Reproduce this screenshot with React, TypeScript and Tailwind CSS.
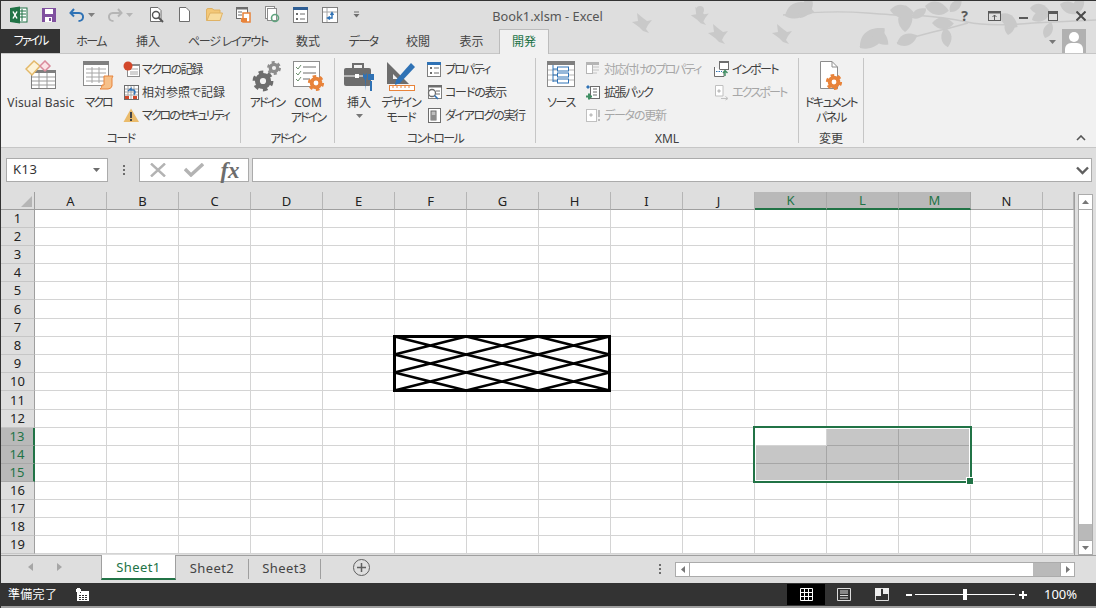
import type { ReactNode } from "react";

const GREEN = "#217346";
const ORANGE = "#e8833a";
const BLUE = "#2f72b5";
const COLUMNS = ["A", "B", "C", "D", "E", "F", "G", "H", "I", "J", "K", "L", "M", "N", ""];
const ROWS = Array.from({ length: 19 }, (_, i) => i + 1);

function Gear({ cx, cy, r, color }: { cx: number; cy: number; r: number; color: string }) {
  const outer = r * 0.95;
  const circ = 2 * Math.PI * outer;
  return (
    <g fill="none" stroke={color}>
      <circle cx={cx} cy={cy} r={r * 0.62} strokeWidth={r * 0.55} />
      <circle cx={cx} cy={cy} r={outer} strokeWidth={r * 0.42} strokeDasharray={`${circ / 12} ${circ / 12}`} />
    </g>
  );
}

function Icon({ w, h, children, box }: { w: number; h: number; children: ReactNode; box?: string }) {
  return (
    <svg width={w} height={h} viewBox={box ?? `0 0 ${w} ${h}`} className="shrink-0">
      {children}
    </svg>
  );
}

function VisualBasicIcon() {
  return (
    <Icon w={32} h={30}>
      <rect x="6.5" y="10.5" width="24" height="18" fill="#fff" stroke="#7f7f7f" />
      <rect x="6" y="10" width="25" height="3" fill="#7f7f7f" />
      {[17, 21, 25].map((y) => (
        <line key={y} x1="7" x2="30" y1={y} y2={y} stroke="#9a9a9a" />
      ))}
      {[14, 22].map((x) => (
        <line key={x} x1={x} x2={x} y1="13" y2="28" stroke="#9a9a9a" />
      ))}
      <path d="M1 9 L9 1 L15 6 L7 15 Z" fill="#fdf3d8" stroke="#e3b868" strokeWidth="1.5" />
      <path d="M15 6 L20 1 L25 6 L20 11 Z" fill="#fbe3e6" stroke="#d98a9b" strokeWidth="1.5" />
    </Icon>
  );
}

function MacroIcon() {
  return (
    <Icon w={32} h={30}>
      <rect x="1.5" y="1.5" width="25" height="24" fill="#fff" stroke="#8c8c8c" />
      <rect x="1" y="1" width="26" height="4" fill="#7f7f7f" />
      {[9, 13, 17, 21].map((y) => (
        <line key={y} x1="4" x2="24" y1={y} y2={y} stroke="#a6a6a6" />
      ))}
      <line x1="10" x2="10" y1="7" y2="23" stroke="#a6a6a6" />
      <line x1="17" x2="17" y1="7" y2="23" stroke="#a6a6a6" />
      <path d="M22 16 H31 L30 18 V26 Q29 29 26 29 H18 Q20 28 20 25 H22 Z" fill="#f6c089" stroke={ORANGE} />
    </Icon>
  );
}

function RecordIcon() {
  return (
    <Icon w={17} h={17}>
      <rect x="4.5" y="3.5" width="12" height="12" fill="#fff" stroke="#8c8c8c" />
      <rect x="4" y="3" width="13" height="2" fill="#8c8c8c" />
      {[8, 11, 13].map((y) => (
        <line key={y} x1="7" x2="15" y1={y} y2={y} stroke="#a6a6a6" />
      ))}
      <circle cx="5" cy="5" r="4.5" fill="#d2472a" />
    </Icon>
  );
}

function RelativeIcon() {
  return (
    <Icon w={17} h={17}>
      <rect x="1.5" y="1.5" width="14" height="14" fill="#fff" stroke="#6d6d6d" />
      {[5, 8, 11].map((n) => (
        <g key={n} stroke="#a6a6a6">
          <line x1="2" x2="15" y1={n} y2={n} />
          <line x1={n} x2={n} y1="2" y2="15" />
        </g>
      ))}
      <rect x="2" y="12" width="4" height="3" fill="#d2472a" />
      <rect x="10" y="12" width="4" height="3" fill="#d2472a" />
      <path d="M5 7 L8 4.5 V6 H11 Q13 8 11 10.5" fill="none" stroke={BLUE} strokeWidth="1.5" />
    </Icon>
  );
}

function WarningIcon() {
  return (
    <Icon w={17} h={17}>
      <path d="M8 1.5 L16 15 H0.5 Z" fill="#eabb6b" />
      <rect x="7" y="5" width="2" height="6" fill="#444" />
      <rect x="7" y="12" width="2" height="2" fill="#444" />
    </Icon>
  );
}

function AddinIcon() {
  return (
    <Icon w={32} h={32}>
      <Gear cx={23} cy={8} r={6} color="#8c8c8c" />
      <Gear cx={12} cy={21} r={9} color="#6d6d6d" />
    </Icon>
  );
}

function ComAddinIcon() {
  return (
    <Icon w={34} h={32}>
      <rect x="2.5" y="1.5" width="26" height="25" fill="#fff" stroke="#8c8c8c" />
      <path d="M5 7 L7 9 L10 5 M5 13 L7 15 L10 11 M5 19 L7 21 L10 17" fill="none" stroke="#6d8f6d" />
      <path d="M12 7 H25 M12 13 H25 M12 19 H19" stroke="#6d6d6d" />
      <Gear cx={25} cy={23} r={7} color={ORANGE} />
    </Icon>
  );
}

function ToolboxIcon() {
  return (
    <Icon w={32} h={32}>
      <path d="M10 8 V4 H20 V8" fill="none" stroke="#6d6d6d" strokeWidth="2" />
      <rect x="1" y="8" width="27" height="18" rx="2" fill="#6d6d6d" />
      <line x1="1" x2="24" y1="16" y2="16" stroke="#fff" />
      <rect x="12" y="14" width="4" height="4" fill="#fff" />
      <path d="M22 31 V20 L20 17 V13 L22 15 L24 13 V17 L23 20" fill={BLUE} />
      <path d="M27 31 V21 H29 V31 Z M25 14 H31 V20 H25 Z" fill={BLUE} />
    </Icon>
  );
}

function DesignIcon() {
  return (
    <Icon w={32} h={32}>
      <path d="M2 2 L2 24 L24 24 Z M8 14 L8 19 L13 19 Z" fill="#6d6d6d" fillRule="evenodd" />
      <path d="M11 20 L10 25 L15 23 L30 7 L26 3 Z" fill={BLUE} />
      <rect x="4.5" y="25.5" width="25" height="5" fill="#fff" stroke={ORANGE} />
      <path d="M8 26 V28 M12 26 V28 M16 26 V28 M20 26 V28 M24 26 V28" stroke={ORANGE} />
    </Icon>
  );
}

function PropertyIcon() {
  return (
    <Icon w={17} h={17}>
      <rect x="1.5" y="1.5" width="13" height="14" fill="#fff" stroke="#7f7f7f" />
      <rect x="1" y="1" width="14" height="3" fill={BLUE} />
      <rect x="4" y="6" width="2" height="2" fill="#6d6d6d" />
      <rect x="4" y="11" width="2" height="2" fill="#6d6d6d" />
      <path d="M8 7 H13 M8 12 H13" stroke="#6d6d6d" />
    </Icon>
  );
}

function CodeIcon() {
  return (
    <Icon w={17} h={17}>
      <rect x="2.5" y="1.5" width="13" height="13" fill="#fff" stroke="#7f7f7f" />
      <rect x="2" y="1" width="14" height="2.5" fill="#6d6d6d" />
      <path d="M10 7 H14 M10 10 H14" stroke="#6d6d6d" />
      <circle cx="6" cy="9" r="3.5" fill="#fff" stroke="#6d6d6d" strokeWidth="1.3" />
      <line x1="8.5" y1="11.5" x2="12" y2="15" stroke={BLUE} strokeWidth="1.6" />
    </Icon>
  );
}

function DialogIcon() {
  return (
    <Icon w={17} h={17}>
      <rect x="2.5" y="1.5" width="12" height="14" fill="#fff" stroke="#6d6d6d" />
      <rect x="5" y="4" width="5" height="9" fill="#bfbfbf" stroke="#6d6d6d" />
      <rect x="5" y="8" width="5" height="5" fill="#8c8c8c" />
    </Icon>
  );
}

function SourceIcon() {
  return (
    <Icon w={30} h={30}>
      <rect x="1.5" y="1.5" width="27" height="25" fill="#fff" stroke="#8c8c8c" />
      <rect x="1" y="1" width="28" height="4" fill="#7f7f7f" />
      {[10, 15, 20].map((y) => (
        <line key={y} x1="2" x2="28" y1={y} y2={y} stroke="#b5b5b5" />
      ))}
      <path d="M7 5 V22 M7 9 H11 M7 15 H11 M7 21 H11" stroke={BLUE} fill="none" />
      <rect x="11.5" y="7" width="11" height="4" fill="#fff" stroke={BLUE} />
      <rect x="11.5" y="13" width="11" height="4" fill="#fff" stroke={BLUE} />
      <rect x="11.5" y="19" width="11" height="4" fill="#fff" stroke={BLUE} />
    </Icon>
  );
}

function MapPropsIcon() {
  return (
    <Icon w={17} h={17}>
      <rect x="1.5" y="1.5" width="6" height="11" fill="#fff" stroke="#b5b5b5" />
      <rect x="1" y="1" width="13" height="3" fill="#b5b5b5" />
      <path d="M8 6 H14 M8 9 H14 M8 12 H12" stroke="#c4c4c4" />
    </Icon>
  );
}

function PackIcon() {
  return (
    <Icon w={17} h={17}>
      <rect x="5.5" y="2.5" width="9" height="12" fill="#fff" stroke="#6d6d6d" />
      <path d="M8 5 H12 M8 8 H12 M8 11 H12" stroke="#6d6d6d" />
      <path d="M1 3 L3 1 L5 3 L3 5 Z" fill={BLUE} />
      <path d="M1 12.5 H7 M4 9.5 V15.5" stroke="#3f8f63" strokeWidth="2" />
    </Icon>
  );
}

function RefreshIcon() {
  return (
    <Icon w={17} h={17}>
      <rect x="1.5" y="2.5" width="10" height="12" fill="#fff" stroke="#c0c0c0" />
      <path d="M4 8 L6 6 L8 8 L6 10 Z" fill="#c0c0c0" />
      <rect x="13" y="3" width="2" height="7" fill="#bdbdbd" />
      <rect x="13" y="12" width="2" height="2" fill="#bdbdbd" />
    </Icon>
  );
}

function ImportIcon() {
  return (
    <Icon w={17} h={17}>
      <rect x="6.5" y="0.5" width="9" height="8" fill="#fff" stroke="#6d6d6d" />
      <rect x="6" y="0" width="10" height="2" fill="#6d6d6d" />
      <path d="M1.5 6 V15.5 H11 V11" fill="#fff" stroke="#6d6d6d" />
      <path d="M3 10.5 H9" stroke={BLUE} strokeDasharray="1.5 1" />
      <path d="M12 15 V10 M10 12 L12 9.5 L14.5 12" fill="none" stroke="#3f8f63" strokeWidth="1.4" />
    </Icon>
  );
}

function ExportIcon() {
  return (
    <Icon w={17} h={17}>
      <path d="M2.5 1.5 H10 V12 H2.5 Z" fill="#fff" stroke="#c0c0c0" />
      <path d="M4 7 L6 5 L8 7 L6 9 Z" fill="#c0c0c0" />
      <path d="M8 14.5 H14 M12.5 12.5 L15 14.5 L12.5 16" fill="none" stroke="#c0c0c0" />
    </Icon>
  );
}

function DocPanelIcon() {
  return (
    <Icon w={30} h={32}>
      <path d="M4.5 1.5 H16 L21.5 7 V28.5 H4.5 Z" fill="#fff" stroke="#8c8c8c" />
      <path d="M16 1.5 V7 H21.5" fill="none" stroke="#8c8c8c" />
      <Gear cx={18} cy={22} r={7} color={ORANGE} />
    </Icon>
  );
}

function Caret({ color = "#6d6d6d" }: { color?: string }) {
  return (
    <svg width="7" height="4" viewBox="0 0 7 4" className="shrink-0">
      <path d="M0 0 H7 L3.5 4 Z" fill={color} />
    </svg>
  );
}

function QuickAccess() {
  return (
    <div className="relative flex h-full items-center pb-[1px] pl-[9px]">
      <svg width="18" height="18" viewBox="0 0 18 18" className="mr-[13px]">
        <rect x="6" y="2" width="11" height="14" fill="#fff" stroke={GREEN} />
        <path d="M10 5 H16 M10 8 H16 M10 11 H16 M12 3 V15" stroke={GREEN} />
        <path d="M0 2 L10 0.5 V17.5 L0 16 Z" fill={GREEN} />
        <path d="M3 5.5 L7 12.5 M7 5.5 L3 12.5" stroke="#fff" strokeWidth="1.5" />
      </svg>
      <svg width="16" height="16" viewBox="0 0 16 16" className="mr-[12px]">
        <rect x="1" y="1" width="14" height="14" fill="#80509f" />
        <rect x="4" y="2" width="8" height="5" fill="#fff" />
        <rect x="4" y="10" width="7" height="5" fill="#fff" />
        <rect x="8" y="11" width="2" height="3" fill="#80509f" />
      </svg>
      <svg width="16" height="14" viewBox="0 0 16 14" className="mr-[3px]">
        <path d="M5 1 L1.5 5 L5 8.5 M2 5 H10 Q14.5 5.5 14 9.5 Q13.5 13 9.5 13" fill="none" stroke={BLUE} strokeWidth="2" />
      </svg>
      <span className="mr-[12px]"><Caret color="#7f7f7f" /></span>
      <svg width="16" height="14" viewBox="0 0 16 14" className="mr-[3px]">
        <path d="M11 1 L14.5 5 L11 8.5 M14 5 H6 Q1.5 5.5 2 9.5 Q2.5 13 6.5 13" fill="none" stroke="#b5b5b5" strokeWidth="2" />
      </svg>
      <span className="mr-[16px]"><Caret color="#b5b5b5" /></span>
      <svg width="16" height="17" viewBox="0 0 16 17" className="mr-[13px]">
        <path d="M1.5 1.5 H9 L12 4.5 V15.5 H1.5 Z" fill="#fff" stroke="#6d6d6d" />
        <circle cx="7" cy="9" r="3.5" fill="#fff" stroke="#555" strokeWidth="1.4" />
        <line x1="9.5" y1="11.5" x2="14" y2="16" stroke="#555" strokeWidth="2" />
      </svg>
      <svg width="13" height="15" viewBox="0 0 13 15" className="mr-[15px]">
        <path d="M1.5 0.5 H8 L11.5 4 V14.5 H1.5 Z" fill="#fff" stroke="#6d6d6d" />
      </svg>
      <svg width="17" height="13" viewBox="0 0 17 13" className="mr-[12px]">
        <path d="M0.5 2 Q0.5 0.5 2 0.5 H6 L8 2 H14 V12.5 H0.5 Z" fill="#f3c777" stroke="#dfb265" />
        <path d="M1 12.5 L4 5 H16.5 L14 12.5 Z" fill="#f8dc9e" stroke="#dfb265" />
      </svg>
      <svg width="17" height="17" viewBox="0 0 17 17" className="mr-[12px]">
        <rect x="1.5" y="1.5" width="11" height="11" fill="#fff" stroke="#6d6d6d" />
        <rect x="1" y="1" width="12" height="2.5" fill="#6d6d6d" />
        <path d="M3 6 H7 M3 9 H7" stroke="#6d6d6d" />
        <rect x="8" y="7" width="7" height="9" fill="#fff" stroke={ORANGE} strokeWidth="1.5" />
        <rect x="6" y="12" width="6" height="4" fill={ORANGE} />
      </svg>
      <svg width="16" height="17" viewBox="0 0 16 17" className="mr-[13px]">
        <rect x="1.5" y="0.5" width="9" height="12" fill="#fff" stroke="#8c8c8c" />
        <rect x="3.5" y="2.5" width="9" height="12" fill="#fff" stroke="#8c8c8c" />
        <circle cx="11" cy="12" r="3.5" fill="none" stroke="#5fa37e" strokeWidth="1.6" />
      </svg>
      <svg width="15" height="16" viewBox="0 0 15 16" className="mr-[14px]">
        <rect x="0.5" y="0.5" width="14" height="15" fill="#fff" stroke="#7f7f7f" />
        <rect x="0" y="0" width="15" height="3" fill="#2f5f95" />
        <rect x="3" y="6" width="2" height="2" fill="#6d6d6d" />
        <rect x="3" y="11" width="2" height="2" fill="#6d6d6d" />
        <path d="M7 7 H12 M7 12 H12" stroke="#6d6d6d" />
      </svg>
      <svg width="16" height="16" viewBox="0 0 16 16" className="mr-[15px]">
        <rect x="0.5" y="0.5" width="15" height="15" fill="#fff" stroke="#7f7f7f" />
        <path d="M5 1 V15 M1 5 H15" stroke="#a6a6a6" />
        <path d="M6 11 H10 V6 M8.5 8 L10 5.5 L11.5 8 M8 9.5 L5.5 11 L8 12.5" fill="none" stroke={BLUE} strokeWidth="1.4" />
      </svg>
      <svg width="7" height="7" viewBox="0 0 7 7">
        <path d="M1 1 H6" stroke="#6d6d6d" />
        <path d="M0.5 3 H6.5 L3.5 6.5 Z" fill="#6d6d6d" />
      </svg>
    </div>
  );
}

function Leaf({ x, y, a, s = 1 }: { x: number; y: number; a: number; s?: number }) {
  return (
    <path
      d="M0 0 C4 -8 12 -9 20 -3 C16 5 6 6 0 0 Z"
      transform={`translate(${x} ${y}) rotate(${a}) scale(${s * 1.2})`}
    />
  );
}

function Bird({ x, y, s = 1 }: { x: number; y: number; s?: number }) {
  return (
    <path
      d="M-8 -2 L-2 -3 L-3 -11 L3 -6 L7 -3 L12 -4 L8 1 L6 5 L9 9 L3 7 L-1 3 Z"
      transform={`translate(${x} ${y}) scale(${s})`}
    />
  );
}

// decoration behind the title bar
function TitleArt() {
  return (
    <svg width="476" height="53" viewBox="620 0 476 53" className="pointer-events-none absolute right-0 top-0">
      <g fill="#c9c9c9">
        <Bird x={640} y={24} />
        <Bird x={698} y={17} s={0.9} />
        <Bird x={716} y={35} />
        <Bird x={780} y={35} />
        <circle cx="700" cy="10" r="4" />
        <g fill="none" stroke="#c9c9c9" strokeWidth="1.5">
          <path d="M783 15 Q830 10 867 13 T913 15 Q945 17 967 22 T1033 23 L1096 20" />
          <path d="M897 43 Q915 36 933 32 T968 23" />
          <path d="M860 47 Q870 38 880 34" />
        </g>
        <Leaf x={785} y={16} a={-15} s={1.2} />
        <Leaf x={800} y={18} a={-50} s={0.9} />
        <Leaf x={808} y={12} a={-80} s={0.7} />
        <Leaf x={795} y={8} a={20} s={0.8} />
        <Leaf x={860} y={48} a={-30} s={1.3} />
        <Leaf x={872} y={30} a={50} s={0.9} />
        <Leaf x={905} y={32} a={-80} s={1.1} />
        <Leaf x={890} y={10} a={15} s={1} />
        <Leaf x={897} y={44} a={-15} s={0.9} />
        <Leaf x={925} y={6} a={20} s={1} />
        <Leaf x={932} y={23} a={10} s={0.9} />
        <Leaf x={945} y={28} a={90} s={0.8} />
        <Leaf x={912} y={18} a={-25} s={0.7} />
        <Leaf x={950} y={12} a={-40} s={0.7} />
        <Leaf x={1008} y={35} a={-70} s={0.8} />
        <Leaf x={1000} y={14} a={45} s={0.9} />
        <Leaf x={1032} y={20} a={-15} s={0.8} />
        <Leaf x={1045} y={38} a={-60} s={0.7} />
        <Leaf x={1075} y={14} a={-60} s={0.8} />
        <Leaf x={1030} y={8} a={15} s={0.8} />
        <Leaf x={1060} y={4} a={30} s={0.9} />
      </g>
    </svg>
  );
}

function WindowControls() {
  return (
    <div className="absolute right-0 top-0 flex h-[29px] items-center text-[#5a5a5a]">
      <span className="w-[29px] pr-[2px] text-center text-[14px] font-bold leading-none">?</span>
      <div className="flex w-[29px] justify-center">
        <svg width="13" height="10" viewBox="0 0 13 10">
          <rect x="0.5" y="0.5" width="12" height="9" fill="none" stroke="#5a5a5a" />
          <rect x="0.5" y="0.5" width="12" height="2" fill="#5a5a5a" />
          <path d="M6.5 9 V4 M4.5 6 L6.5 4 L8.5 6" fill="none" stroke="#5a5a5a" />
        </svg>
      </div>
      <div className="flex w-[29px] justify-center">
        <div className="h-[2px] w-[9px] translate-y-[2px] bg-[#5a5a5a]" />
      </div>
      <div className="flex w-[29px] justify-center">
        <div className="h-[10px] w-[10px] border border-t-[3px] border-[#5a5a5a]" />
      </div>
      <div className="flex w-[29px] justify-center pr-[1px]">
        <svg width="10" height="10" viewBox="0 0 10 10">
          <path d="M0.5 0.5 L9.5 9.5 M9.5 0.5 L0.5 9.5" stroke="#4a4a4a" strokeWidth="2" />
        </svg>
      </div>
    </div>
  );
}

const TABS = [
  { label: "ホーム", cls: "w-[62px] tracking-[-1.6px]" },
  { label: "挿入", cls: "w-[52px]" },
  { label: "ページ レイアウト", cls: "w-[108px] tracking-[-1.2px]" },
  { label: "数式", cls: "w-[52px]" },
  { label: "データ", cls: "w-[58px] tracking-[-1.6px]" },
  { label: "校閲", cls: "w-[52px]" },
  { label: "表示", cls: "w-[55px]" },
];

function TabRow() {
  return (
    <div className="relative z-10 flex h-[24px] items-stretch text-[12px] text-[#444]">
      <div className="flex w-[59px] items-center justify-center bg-[#333] tracking-[-2px] text-white">ファイル</div>
      {TABS.map((t) => (
        <div key={t.label} className={`flex items-center justify-center pt-[1px] ${t.cls}`}>{t.label}</div>
      ))}
      <div className="flex h-[25px] w-[50px] items-center justify-center border-x border-t border-[#bcbcbc] bg-[#f1f1f1] text-[#217346]">
        開発
      </div>
      <div className="ml-auto mr-[10px] flex items-stretch">
        <div className="mr-[6px] flex items-center pt-[1px]"><Caret color="#777" /></div>
        <div className="relative h-[24px] w-[24px] overflow-hidden bg-[#b1b1b1]">
          <div className="absolute left-[7px] top-[3px] h-[10px] w-[10px] rounded-full bg-white" />
          <div className="absolute left-[3px] top-[14px] h-[12px] w-[18px] rounded-t-[6px] bg-white" />
        </div>
      </div>
    </div>
  );
}

function BigButton({ icon, label, cls, caret }: { icon: ReactNode; label: ReactNode; cls: string; caret?: boolean }) {
  return (
    <div className={`flex shrink-0 flex-col items-center ${cls}`}>
      <div className="flex h-[37px] w-full items-start justify-center pt-[2px]">{icon}</div>
      <div className="whitespace-nowrap text-center leading-[15px]">{label}</div>
      {caret && <div className="mt-[4px]"><Caret color="#777" /></div>}
    </div>
  );
}

function SmallButton({ icon, label, track, disabled }: { icon: ReactNode; label: string; track?: string; disabled?: boolean }) {
  return (
    <div className={`flex h-[23px] items-center gap-[2px] whitespace-nowrap ${disabled ? "text-[#a6a6a6]" : ""}`}>
      {icon}
      <span className={track}>{label}</span>
    </div>
  );
}

function Group({ title, cls, children }: { title: string; cls: string; children: ReactNode }) {
  return (
    <div className={`my-[4px] flex shrink-0 flex-col border-r border-[#c6c6c6] ${cls}`}>
      <div className="flex h-[73px] shrink-0 items-start">{children}</div>
      <div className="h-[12px] text-center leading-[15px]">{title}</div>
    </div>
  );
}

function Ribbon() {
  return (
    <div className="relative flex h-[95px] shrink-0 border-y border-[#c6c6c6] bg-[#f1f1f1] text-[12px] text-[#404040]">
      <Group title="コード" cls="w-[240px] tracking-[-1.6px]">
        <div className="w-[5px]" />
        <BigButton icon={<VisualBasicIcon />} label="Visual Basic" cls="w-[70px] tracking-[0.15px]" />
        <BigButton icon={<MacroIcon />} label="マクロ" cls="w-[44px] tracking-[-2px]" />
        <div className="ml-[3px] flex flex-col tracking-normal">
          <SmallButton icon={<RecordIcon />} label="マクロの記録" track="tracking-[-1.5px]" />
          <SmallButton icon={<RelativeIcon />} label="相対参照で記録" />
          <SmallButton icon={<WarningIcon />} label="マクロのセキュリティ" track="tracking-[-2px]" />
        </div>
      </Group>
      <Group title="アドイン" cls="w-[94px] tracking-[-1.8px]">
        <div className="w-[6px]" />
        <BigButton icon={<AddinIcon />} label="アドイン" cls="w-[40px]" />
        <BigButton icon={<ComAddinIcon />} label={<><span className="tracking-normal">COM</span><br />アドイン</>} cls="w-[42px]" />
      </Group>
      <Group title="コントロール" cls="w-[201px] tracking-[-1.6px]">
        <div className="w-[4px]" />
        <BigButton icon={<ToolboxIcon />} label="挿入" cls="w-[40px] tracking-normal" caret />
        <BigButton icon={<DesignIcon />} label={<>デザイン<br />モード</>} cls="w-[44px] tracking-[-1.2px]" />
        <div className="ml-[3px] flex flex-col tracking-normal">
          <SmallButton icon={<PropertyIcon />} label="プロパティ" track="tracking-[-1.8px]" />
          <SmallButton icon={<CodeIcon />} label="コードの表示" track="tracking-[-1.2px]" />
          <SmallButton icon={<DialogIcon />} label="ダイアログの実行" track="tracking-[-1.4px]" />
        </div>
      </Group>
      <Group title="XML" cls="w-[263px]">
        <div className="w-[5px]" />
        <BigButton icon={<SourceIcon />} label="ソース" cls="w-[40px] tracking-[-1.3px]" />
        <div className="ml-[4px] flex w-[128px] flex-col">
          <SmallButton icon={<MapPropsIcon />} label="対応付けのプロパティ" track="tracking-[-1.6px]" disabled />
          <SmallButton icon={<PackIcon />} label="拡張パック" track="tracking-[-1.4px]" />
          <SmallButton icon={<RefreshIcon />} label="データの更新" track="tracking-[-1.2px]" disabled />
        </div>
        <div className="flex flex-col">
          <SmallButton icon={<ImportIcon />} label="インポート" track="tracking-[-1.6px]" />
          <SmallButton icon={<ExportIcon />} label="エクスポート" track="tracking-[-1.8px]" disabled />
        </div>
      </Group>
      <Group title="変更" cls="w-[65px]">
        <BigButton icon={<DocPanelIcon />} label={<>ドキュメント<br />パネル</>} cls="w-[64px] tracking-[-1.5px]" />
      </Group>
      <svg width="10" height="6" viewBox="0 0 10 6" className="absolute bottom-[6px] right-[10px]">
        <path d="M1 5 L5 1 L9 5" fill="none" stroke="#555" strokeWidth="1.6" />
      </svg>
    </div>
  );
}

function FormulaBar() {
  return (
    <div className="flex h-[44px] shrink-0 items-start bg-[#dedede] pl-[5px] pr-[4px] pt-[10px]">
      <div className="flex h-[24px] w-[102px] items-center justify-between border border-[#ababab] bg-white pl-[6px] pr-[7px] text-[13px] tracking-[0.5px] text-[#333]">
        K13
        <Caret color="#6d6d6d" />
      </div>
      <div className="flex h-[24px] w-[31px] flex-col items-center justify-center gap-[2px]">
        {[0, 1, 2].map((n) => (
          <div key={n} className="h-[2px] w-[2px] bg-[#6d6d6d]" />
        ))}
      </div>
      <div className="flex h-[24px] w-[110px] items-center border border-[#ababab] bg-white">
        <div className="flex w-[36px] justify-center">
          <svg width="16" height="14" viewBox="0 0 16 14">
            <path d="M1 0.5 L15 13.5 M15 0.5 L1 13.5" stroke="#b3b3b3" strokeWidth="2.4" />
          </svg>
        </div>
        <div className="flex w-[36px] justify-center">
          <svg width="20" height="14" viewBox="0 0 20 14">
            <path d="M1 6 L7 12 L19 1" fill="none" stroke="#b3b3b3" strokeWidth="3.4" />
          </svg>
        </div>
        <span className="w-[36px] text-center [font-family:'Liberation_Serif',serif] text-[23px] font-bold italic leading-none text-[#6d6d6d]">fx</span>
      </div>
      <div className="ml-[3px] flex h-[24px] min-w-0 flex-1 items-center justify-end border border-[#ababab] bg-white pr-[2px]">
        <svg width="13" height="9" viewBox="0 0 13 9">
          <path d="M1 1.5 L6.5 7 L12 1.5" fill="none" stroke="#5f5f5f" strokeWidth="2.4" />
        </svg>
      </div>
    </div>
  );
}

function isSelectedCell(col: number, row: number) {
  return col >= 10 && col <= 12 && row >= 13 && row <= 15 && !(col === 10 && row === 13);
}

function SheetGrid() {
  return (
    <div className="relative w-[1074px] shrink-0 border-r border-[#9f9f9f]">
      <div className="grid grid-cols-[34px_repeat(14,72px)_31px] grid-rows-[18px_repeat(5,18px)_19px_repeat(4,18px)_19px_repeat(8,18px)] text-[13px] text-[#222]">
        <div className="flex items-end justify-end border-b border-r border-[#9f9f9f] bg-[#dedede] pb-[2px] pr-[2px]">
          <div className="h-0 w-0 border-b-[11px] border-l-[11px] border-b-[#b5b5b5] border-l-transparent" />
        </div>
        {COLUMNS.map((c, i) => {
          const on = i >= 10 && i <= 12;
          return (
            <div
              key={`h${i}`}
              className={`flex items-center justify-center pt-[2px] ${
                on
                  ? "border-b-2 border-r border-b-[#217346] border-r-[#a8a8a8] bg-[#b9b9b9] text-[#217346]"
                  : "border-b border-r border-b-[#9f9f9f] border-r-[#b5b5b5] bg-[#dedede]"
              }`}
            >
              {c}
            </div>
          );
        })}
        {ROWS.map((r) => {
          const on = r >= 13 && r <= 15;
          return (
            <div key={r} className="contents">
              <div
                className={`flex items-center justify-center border-b pt-[1px] ${
                  on
                    ? "border-r-2 border-b-[#a8a8a8] border-r-[#217346] bg-[#b9b9b9] text-[#217346]"
                    : "border-r border-b-[#c6c6c6] border-r-[#9f9f9f] bg-[#dedede]"
                }`}
              >
                {r}
              </div>
              {COLUMNS.map((_, i) => (
                <div
                  key={i}
                  className={`border-b border-r ${
                    isSelectedCell(i, r) ? "border-[#a6a6a6] bg-[#c6c6c6]" : "border-[#d4d4d4] bg-white"
                  }`}
                />
              ))}
            </div>
          );
        })}
      </div>

      {/* diagonal borders on F8:H10 */}
      <svg width="218" height="57" viewBox="0 0 218 57" className="absolute left-[392px] top-[143px]">
        <g stroke="#000" strokeWidth="2.4" fill="none">
          <rect x="1.5" y="1.5" width="215" height="54" strokeWidth="3" />
          {[0, 1, 2].map((c) =>
            [0, 1, 2].map((r) => {
              const x = 1.5 + (c * 215) / 3;
              const y = 1.5 + (r * 54) / 3;
              const w = 215 / 3;
              const h = 54 / 3;
              return (
                <path key={`${c}-${r}`} d={`M${x} ${y} L${x + w} ${y + h} M${x + w} ${y} L${x} ${y + h}`} />
              );
            }),
          )}
        </g>
      </svg>

      {/* selection outline K13:M15 */}
      <div className="absolute left-[752px] top-[234px] h-[57px] w-[219px] border-2 border-[#217346] outline outline-1 -outline-offset-3 outline-white">
        <div className="absolute -bottom-[4px] -right-[4px] box-content h-[6px] w-[6px] border border-white bg-[#217346]" />
      </div>
    </div>
  );
}

function VerticalScroll() {
  return (
    <div className="ml-[3px] mt-[2px] flex w-[15px] flex-col border border-[#ababab]">
      <div className="flex h-[15px] items-center justify-center border-b border-[#ababab] bg-white">
        <svg width="7" height="4" viewBox="0 0 7 4"><path d="M0 4 H7 L3.5 0 Z" fill="#777" /></svg>
      </div>
      <div className="h-[314px] bg-white" />
      <div className="flex-1 bg-[#b9b9b9]" />
      <div className="flex h-[14px] items-center justify-center border-t border-[#ababab] bg-white">
        <Caret color="#777" />
      </div>
    </div>
  );
}

function SheetTabs() {
  return (
    <div className="flex h-[28px] shrink-0 items-start border-t border-[#9f9f9f] bg-[#dedede] text-[13px] tracking-[0.4px] text-[#444]">
      <div className="flex h-[22px] w-[100px] items-center pl-[27px]">
        <svg width="5" height="8" viewBox="0 0 5 8"><path d="M5 0 V8 L0 4 Z" fill="#a6a6a6" /></svg>
        <svg width="5" height="8" viewBox="0 0 5 8" className="ml-[24px]"><path d="M0 0 V8 L5 4 Z" fill="#a6a6a6" /></svg>
      </div>
      <div className="-mt-[1px] flex h-[25px] w-[75px] items-center justify-center border-x border-b-2 border-x-[#9f9f9f] border-b-[#217346] bg-white pt-[2px] text-[#217346]">
        Sheet1
      </div>
      <div className="mt-[3px] flex h-[20px] w-[73px] items-center justify-center border-r border-[#9f9f9f]">Sheet2</div>
      <div className="mt-[3px] flex h-[20px] w-[72px] items-center justify-center border-r border-[#9f9f9f]">Sheet3</div>
      <div className="ml-[32px] mt-[3px] flex h-[17px] w-[17px] items-center justify-center rounded-full border border-[#5f5f5f]">
        <svg width="9" height="9" viewBox="0 0 9 9"><path d="M4.5 0 V9 M0 4.5 H9" stroke="#5f5f5f" strokeWidth="1.5" /></svg>
      </div>
      <div className="ml-[289px] mt-[6px] flex h-[14px] flex-col justify-center gap-[2px]">
        {[0, 1, 2].map((n) => (
          <div key={n} className="h-[2px] w-[2px] bg-[#6d6d6d]" />
        ))}
      </div>
      <div className="ml-[14px] mt-[6px] flex h-[15px] w-[400px] border border-[#ababab]">
        <div className="flex w-[14px] items-center justify-center border-r border-[#ababab] bg-white">
          <svg width="4" height="7" viewBox="0 0 4 7"><path d="M4 0 V7 L0 3.5 Z" fill="#777" /></svg>
        </div>
        <div className="w-[343px] bg-white" />
        <div className="flex-1 bg-[#b9b9b9]" />
        <div className="flex w-[14px] items-center justify-center border-l border-[#ababab] bg-white">
          <svg width="4" height="7" viewBox="0 0 4 7"><path d="M0 0 V7 L4 3.5 Z" fill="#777" /></svg>
        </div>
      </div>
    </div>
  );
}

function StatusBar() {
  return (
    <div className="flex h-[23px] shrink-0 items-center bg-[#333] text-[12px] text-white">
      <span className="ml-[7px] w-[68px] tracking-[0.3px]">準備完了</span>
      <svg width="13" height="13" viewBox="0 0 13 13" shapeRendering="crispEdges">
        <circle cx="2.5" cy="2.5" r="2.5" fill="#fff" />
        <rect x="1" y="5" width="12" height="8" fill="#fff" />
        <rect x="5" y="3" width="8" height="2" fill="#fff" />
        <path d="M3 7.5 H12 M3 9.5 H12 M3 11.5 H12" stroke="#333" strokeDasharray="2 1" />
      </svg>
      <div className="ml-[698px] flex h-[21px] w-[38px] items-center justify-center bg-black">
        <svg width="13" height="13" viewBox="0 0 13 13">
          <path d="M0.5 0.5 H12.5 V12.5 H0.5 Z M4.5 0.5 V12.5 M8.5 0.5 V12.5 M0.5 4.5 H12.5 M0.5 8.5 H12.5" fill="none" stroke="#fff" />
        </svg>
      </div>
      <svg width="14" height="13" viewBox="0 0 14 13" className="ml-[12px]">
        <path d="M0.5 0.5 H13.5 V12.5 H0.5 Z" fill="none" stroke="#ddd" />
        <path d="M3 3 H11 M3 5 H11 M3 7.5 H11 M3 10 H11" stroke="#ddd" />
      </svg>
      <svg width="14" height="13" viewBox="0 0 14 13" className="ml-[24px]">
        <path d="M0.5 0.5 H13.5 V12.5 H0.5 Z" fill="none" stroke="#ddd" />
        <path d="M0 0 H6 V8 H0 Z M8 0 H14 V6 H8 Z" fill="#eee" />
      </svg>
      <div className="ml-[17px] h-[2px] w-[6px] bg-white" />
      <div className="relative ml-[3px] h-[1px] w-[100px] bg-white">
        <div className="absolute -top-[5px] left-[48px] h-[11px] w-[4px] bg-white" />
      </div>
      <span className="relative ml-[4px] h-[8px] w-[8px]">
        <span className="absolute left-0 top-[3px] h-[2px] w-[8px] bg-white" />
        <span className="absolute left-[3px] top-0 h-[8px] w-[2px] bg-white" />
      </span>
      <span className="ml-[17px] text-[13px]">100%</span>
    </div>
  );
}

export default function App() {
  return (
    <div className="relative flex h-[608px] w-[1096px] flex-col overflow-hidden border-l border-[#333] bg-[#dedede] [font-family:'Noto_Sans','Noto_Sans_CJK_JP',sans-serif] [font-feature-settings:'palt']">
      <TitleArt />
      <div className="relative h-[29px] shrink-0 border-t border-[#333]">
        <QuickAccess />
        <div className="absolute inset-x-0 top-[6px] pr-[2px] text-center text-[12.8px] text-[#555]">Book1.xlsm - Excel</div>
        <WindowControls />
      </div>
      <TabRow />
      <Ribbon />
      <FormulaBar />
      <div className="flex h-[363px] shrink-0 items-stretch overflow-hidden">
        <SheetGrid />
        <VerticalScroll />
      </div>
      <SheetTabs />
      <StatusBar />
      <div className="h-[2px] shrink-0 bg-[#a0a0a0]" />
    </div>
  );
}
